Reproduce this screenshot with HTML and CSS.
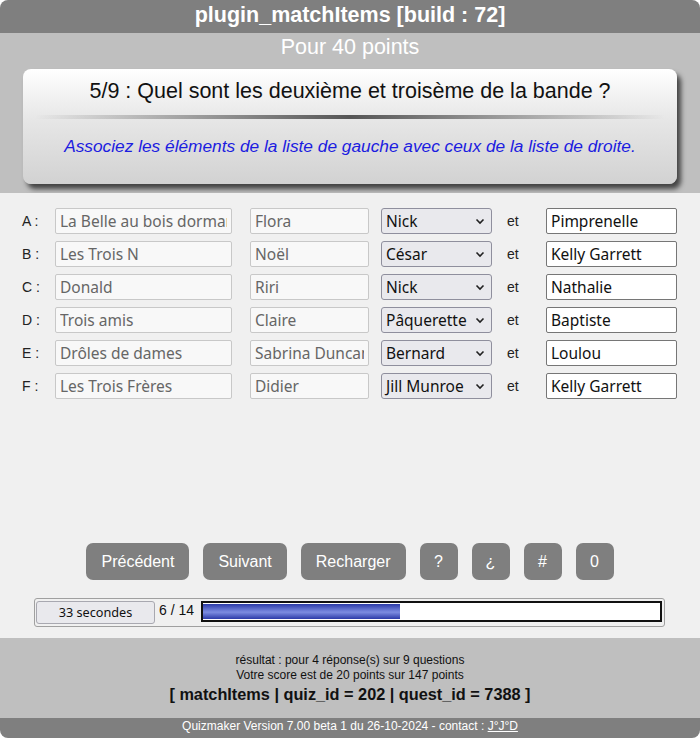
FILE: index.html
```html
<!DOCTYPE html>
<html lang="fr">
<head>
<meta charset="utf-8">
<title>plugin_matchItems</title>
<link rel="stylesheet" href="styles.css">
</head>
<body>
<div class="app">
  <div class="topbar">plugin_matchItems [build : 72]</div>
  <div class="head">
    <div class="points">Pour 40 points</div>
    <div class="card">
      <div class="question">5/9 : Quel sont les deuxième et troisème de la bande ?</div>
      <div class="sep"></div>
      <div class="consigne">Associez les éléments de la liste de gauche avec ceux de la liste de droite.</div>
    </div>
  </div>
  <div class="main">
    <div class="rows">
      <div class="row">
        <span class="lbl">A :</span>
        <input class="fld f1" readonly value="La Belle au bois dormant">
        <input class="fld f2" readonly value="Flora">
        <div class="sel"><span>Nick</span><svg width="10" height="7" viewBox="0 0 10 7"><path d="M1.5 1.5 L5 5 L8.5 1.5" fill="none" stroke="#222" stroke-width="1.6"/></svg></div>
        <span class="et">et</span>
        <input class="fld f4" value="Pimprenelle">
      </div>
      <div class="row">
        <span class="lbl">B :</span>
        <input class="fld f1" readonly value="Les Trois N">
        <input class="fld f2" readonly value="Noël">
        <div class="sel"><span>César</span><svg width="10" height="7" viewBox="0 0 10 7"><path d="M1.5 1.5 L5 5 L8.5 1.5" fill="none" stroke="#222" stroke-width="1.6"/></svg></div>
        <span class="et">et</span>
        <input class="fld f4" value="Kelly Garrett">
      </div>
      <div class="row">
        <span class="lbl">C :</span>
        <input class="fld f1" readonly value="Donald">
        <input class="fld f2" readonly value="Riri">
        <div class="sel"><span>Nick</span><svg width="10" height="7" viewBox="0 0 10 7"><path d="M1.5 1.5 L5 5 L8.5 1.5" fill="none" stroke="#222" stroke-width="1.6"/></svg></div>
        <span class="et">et</span>
        <input class="fld f4" value="Nathalie">
      </div>
      <div class="row">
        <span class="lbl">D :</span>
        <input class="fld f1" readonly value="Trois amis">
        <input class="fld f2" readonly value="Claire">
        <div class="sel"><span>Pâquerette</span><svg width="10" height="7" viewBox="0 0 10 7"><path d="M1.5 1.5 L5 5 L8.5 1.5" fill="none" stroke="#222" stroke-width="1.6"/></svg></div>
        <span class="et">et</span>
        <input class="fld f4" value="Baptiste">
      </div>
      <div class="row">
        <span class="lbl">E :</span>
        <input class="fld f1" readonly value="Drôles de dames">
        <input class="fld f2" readonly value="Sabrina Duncan">
        <div class="sel"><span>Bernard</span><svg width="10" height="7" viewBox="0 0 10 7"><path d="M1.5 1.5 L5 5 L8.5 1.5" fill="none" stroke="#222" stroke-width="1.6"/></svg></div>
        <span class="et">et</span>
        <input class="fld f4" value="Loulou">
      </div>
      <div class="row">
        <span class="lbl">F :</span>
        <input class="fld f1" readonly value="Les Trois Frères">
        <input class="fld f2" readonly value="Didier">
        <div class="sel"><span>Jill Munroe</span><svg width="10" height="7" viewBox="0 0 10 7"><path d="M1.5 1.5 L5 5 L8.5 1.5" fill="none" stroke="#222" stroke-width="1.6"/></svg></div>
        <span class="et">et</span>
        <input class="fld f4" value="Kelly Garrett">
      </div>
    </div>
    <div class="buttons">
      <button class="btn">Précédent</button>
      <button class="btn">Suivant</button>
      <button class="btn">Recharger</button>
      <button class="btn sq">?</button>
      <button class="btn sq">¿</button>
      <button class="btn sq">#</button>
      <button class="btn sq">0</button>
    </div>
    <div class="progress">
      <div class="timer">33 secondes</div>
      <span class="count">6 / 14</span>
      <div class="track"><div class="fill" style="width:197px"></div></div>
    </div>
  </div>
  <div class="foot">
    <div class="line">résultat : pour 4 réponse(s) sur 9 questions</div>
    <div class="line">Votre score est de 20 points sur 147 points</div>
    <div class="ids">[ matchItems | quiz_id = 202 | quest_id = 7388 ]</div>
  </div>
  <div class="bottom">Quizmaker Version 7.00 beta 1 du 26-10-2024 - contact : <a href="#">J°J°D</a></div>
</div>
</body>
</html>
```

FILE: styles.css
```css
* { box-sizing: border-box; }
html, body { margin: 0; padding: 0; background: #ffffff; }
body { font-family: "Liberation Sans", Arial, sans-serif; }

.app {
  width: 700px;
  height: 738px;
  border-radius: 8px;
  overflow: hidden;
  display: flex;
  flex-direction: column;
}

.topbar {
  height: 33px;
  background: #7f7f7f;
  color: #fff;
  font-weight: bold;
  font-size: 21.5px;
  line-height: 31px;
  text-align: center;
}

.head {
  background: #bfbfbf;
  height: 160px;
}
.points {
  color: #fff;
  font-size: 21.5px;
  line-height: 28px;
  text-align: center;
}
.card {
  margin: 8px 23px 0 23px;
  height: 115px;
  border-radius: 8px;
  background: linear-gradient(#ffffff 0%, #e6e6e6 45%, #d2d2d2 100%);
  box-shadow: 4px 5px 5px #444;
  padding-top: 9px;
}
.question {
  font-size: 21.5px;
  line-height: 26px;
  text-align: center;
  color: #111;
}
.sep {
  height: 4px;
  margin: 11px 12px 0 12px;
  background: linear-gradient(90deg, rgba(80,80,80,0) 0%, #555 50%, rgba(80,80,80,0) 100%);
  border-radius: 2px;
}
.consigne {
  margin-top: 17px;
  font-size: 17.3px;
  line-height: 20px;
  font-style: italic;
  color: #1c1ce0;
  text-align: center;
}

.main {
  background: #f0f0f0;
  height: 445px;
  padding-top: 15px;
}
.rows {
  display: flex;
  flex-direction: column;
  gap: 7px;
  height: 327px;
}
.row {
  display: flex;
  align-items: center;
  height: 26px;
  padding-left: 22px;
}
.lbl {
  width: 33px;
  font-size: 14px;
  color: #222;
}
.fld {
  height: 26px;
  margin: 0;
  font-family: "Noto Sans", "Open Sans", sans-serif;
  font-size: 15.5px;
  padding: 0 4px;
  outline: none;
}
.f1, .f2 {
  background: #f8f8f8;
  border: 1px solid #c8c8c8;
  color: #666;
  border-radius: 2px;
}
.f1 { width: 177px; }
.f2 { width: 119px; margin-left: 18px; }
.sel {
  width: 111px;
  height: 26px;
  margin-left: 12px;
  background: #e9e9ed;
  border: 1px solid #8f8f9d;
  border-radius: 3px;
  display: flex;
  align-items: center;
  justify-content: space-between;
  padding: 0 6px 0 4px;
  font-family: "Noto Sans", "Open Sans", sans-serif;
  font-size: 15.5px;
  color: #111;
}
.et {
  width: 54px;
  padding-left: 15px;
  font-size: 14px;
  color: #222;
}
.f4 {
  width: 131px;
  background: #fff;
  border: 1px solid #767676;
  border-radius: 2px;
  color: #111;
}

.buttons {
  display: flex;
  justify-content: center;
  gap: 14px;
  margin-top: 8px;
}
.btn {
  height: 37px;
  background: #7f7f7f;
  color: #fff;
  border: none;
  border-radius: 7px;
  font-family: "Liberation Sans", Arial, sans-serif;
  font-size: 16px;
  padding: 0 15px;
}
.btn.sq { width: 38px; padding: 0; }

.progress {
  margin: 18px 35px 0 34px;
  height: 29px;
  border: 1px solid #a0a0a0;
  border-radius: 3px;
  display: flex;
  align-items: center;
  padding: 0 2px 0 1px;
}
.timer {
  width: 119px;
  height: 23px;
  background: #e9e9ed;
  border: 1px solid #a8a8b0;
  border-radius: 3px;
  font-family: "Noto Sans", "Open Sans", sans-serif;
  font-size: 12.7px;
  line-height: 21px;
  text-align: center;
  color: #111;
}
.count {
  margin-left: 4px;
  width: 42px;
  font-size: 14px;
  color: #111;
  align-self: flex-start;
  margin-top: 3px;
}
.track {
  flex: 1;
  height: 21px;
  align-self: flex-start;
  margin-top: 2px;
  border: 2px solid #111;
  background: #fff;
  padding: 1px 0;
}
.fill {
  height: 100%;
  background: linear-gradient(#2b3aa8 0%, #6f7fd8 45%, #7c8ce0 55%, #2b3aa8 100%);
}

.foot {
  background: #bfbfbf;
  height: 80px;
  text-align: center;
  padding-top: 15px;
  color: #111;
}
.line { font-size: 12px; line-height: 15px; }
.ids {
  font-size: 16.3px;
  font-weight: bold;
  line-height: 20px;
  margin-top: 1px;
}
.bottom {
  background: #7f7f7f;
  height: 20px;
  color: #fff;
  font-size: 12px;
  line-height: 16px;
  text-align: center;
}
.bottom a { color: #fff; }
```
